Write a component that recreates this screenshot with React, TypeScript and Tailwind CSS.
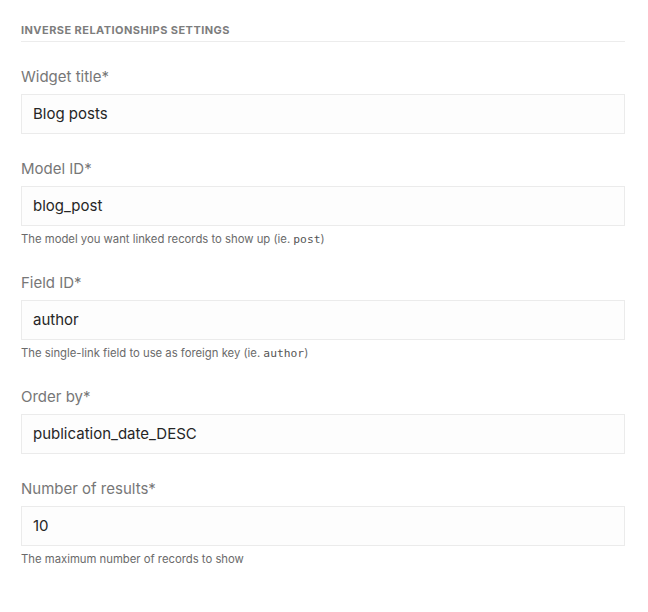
import { ReactNode } from "react";

interface Field {
  label: string;
  value: string;
  hint?: ReactNode;
}

const Code = ({ children }: { children: ReactNode }) => (
  <code className="font-['DejaVu_Sans_Mono',monospace] text-[11.3px] text-[#555]">{children}</code>
);

const fields: Field[] = [
  { label: "Widget title*", value: "Blog posts" },
  {
    label: "Model ID*",
    value: "blog_post",
    hint: (
      <>
        The model you want linked records to show up (ie. <Code>post</Code>)
      </>
    ),
  },
  {
    label: "Field ID*",
    value: "author",
    hint: (
      <>
        The single-link field to use as foreign key (ie. <Code>author</Code>)
      </>
    ),
  },
  { label: "Order by*", value: "publication_date_DESC" },
  { label: "Number of results*", value: "10", hint: "The maximum number of records to show" },
];

export default function App() {
  return (
    <div className="w-[648px] h-[612px] bg-white pl-[21px] pr-[23px] pt-[23px] font-['Inter',sans-serif]">
      {/* section header */}
      <div className="border-b border-[#ececec] pb-[4px] mb-[25px]">
        <h3 className="text-[11px] leading-[14px] font-bold uppercase text-[#7d7d7d] tracking-[0.04em]">
          Inverse relationships settings
        </h3>
      </div>

      {fields.map((f) => (
        <div key={f.label} className="mb-[25px]">
          <label className="block text-[15px] leading-[20px] text-[#777] mb-[7px]">{f.label}</label>
          <div className="h-[40px] border border-[#ebebeb] bg-[#fdfdfd] flex items-center px-[11px] text-[15px] text-[#262626]">
            {f.value}
          </div>
          {f.hint && (
            <p className="mt-[5px] text-[11.3px] leading-[17px] text-[#6a6a6a]">{f.hint}</p>
          )}
        </div>
      ))}
    </div>
  );
}
